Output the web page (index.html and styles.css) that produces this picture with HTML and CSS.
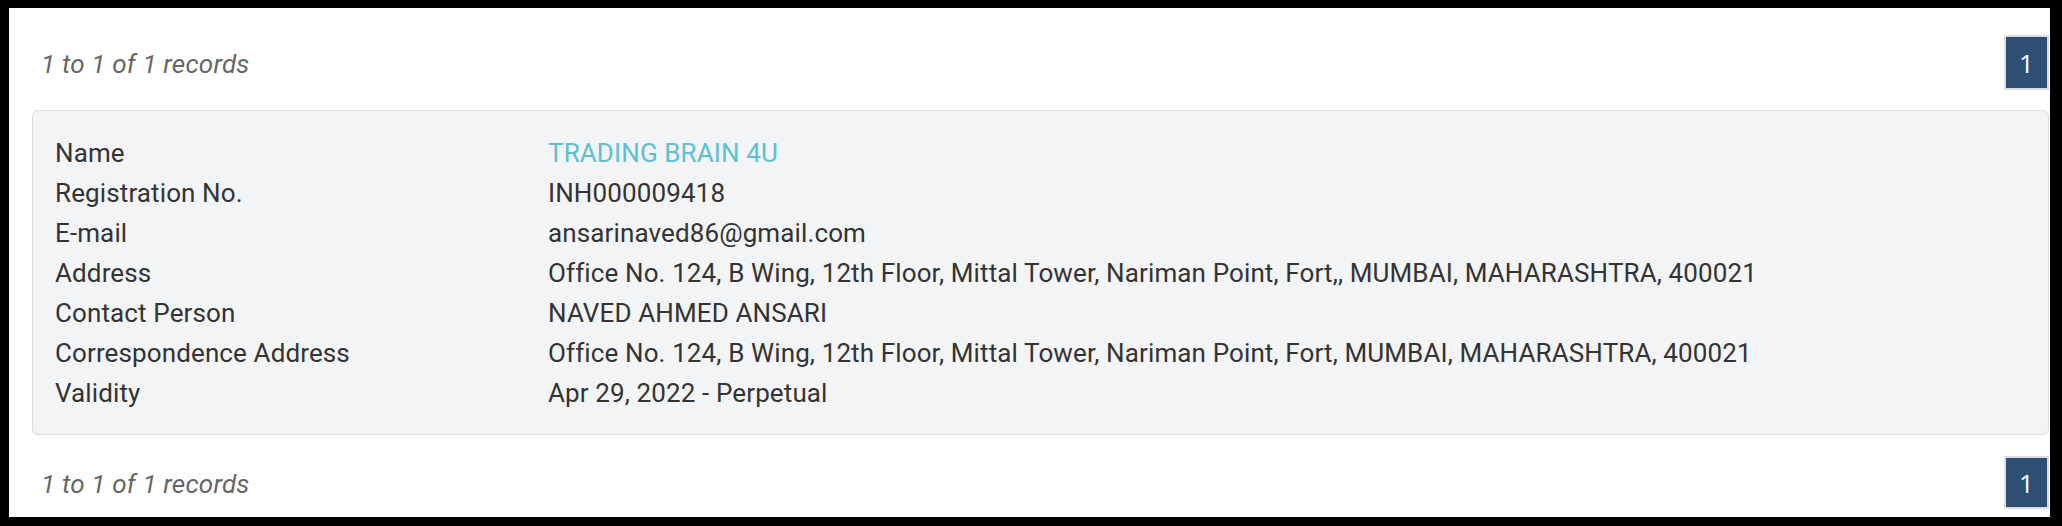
FILE: index.html
```html
<!DOCTYPE html>
<html>
<head>
<meta charset="utf-8">
<link rel="stylesheet" href="styles.css">
</head>
<body>
<div class="page">
  <div class="pager">
    <span class="count">1 to 1 of 1 records</span>
    <span class="pbtn">1</span>
  </div>
  <div class="card">
    <div class="row"><div class="label">Name</div><div class="value name">TRADING BRAIN 4U</div></div>
    <div class="row"><div class="label">Registration No.</div><div class="value">INH000009418</div></div>
    <div class="row"><div class="label">E-mail</div><div class="value">ansarinaved86@gmail.com</div></div>
    <div class="row"><div class="label">Address</div><div class="value">Office No. 124, B Wing, 12th Floor, Mittal Tower, Nariman Point, Fort,, MUMBAI, MAHARASHTRA, 400021</div></div>
    <div class="row"><div class="label">Contact Person</div><div class="value">NAVED AHMED ANSARI</div></div>
    <div class="row"><div class="label">Correspondence Address</div><div class="value">Office No. 124, B Wing, 12th Floor, Mittal Tower, Nariman Point, Fort, MUMBAI, MAHARASHTRA, 400021</div></div>
    <div class="row"><div class="label">Validity</div><div class="value">Apr 29, 2022 - Perpetual</div></div>
  </div>
  <div class="pager bottom">
    <span class="count">1 to 1 of 1 records</span>
    <span class="pbtn">1</span>
  </div>
</div>
</body>
</html>
```
FILE: styles.css
```css
html, body {
  margin: 0;
  padding: 0;
}
body {
  background: #000;
  padding: 8px 12px 9px 9px;
  width: 2062px;
  height: 526px;
  box-sizing: border-box;
  font-family: Roboto, "Liberation Sans", sans-serif;
}
.page {
  background: #fff;
  height: 100%;
  box-sizing: border-box;
  padding: 27px 1px 0 23px;
  overflow: hidden;
}
.pager {
  display: flex;
  justify-content: space-between;
  align-items: center;
  height: 55px;
}
.pager.bottom {
  margin-top: 21px;
  height: 53px;
}
.count {
  font-style: italic;
  font-size: 26px;
  letter-spacing: 0.2px;
  color: #666;
  padding-left: 9px;
  padding-top: 2px;
}
.pbtn {
  box-sizing: border-box;
  width: 45px;
  height: 100%;
  display: flex;
  align-items: center;
  justify-content: center;
  background: #2f5075;
  border: 2px solid #dcdcdc;
  color: #fff;
  font-family: "Open Sans", sans-serif;
  font-size: 26px;
}
.card {
  margin-top: 20px;
  background: #f3f4f6;
  border: 1px solid #dddddd;
  border-radius: 6px;
  padding: 22px 22px 21px 22px;
}
.row {
  display: grid;
  grid-template-columns: 493px 1fr;
  line-height: 40px;
  font-size: 26px;
  letter-spacing: 0.12px;
  color: #333;
}
.value.name {
  color: #5bc0d4;
}
```
